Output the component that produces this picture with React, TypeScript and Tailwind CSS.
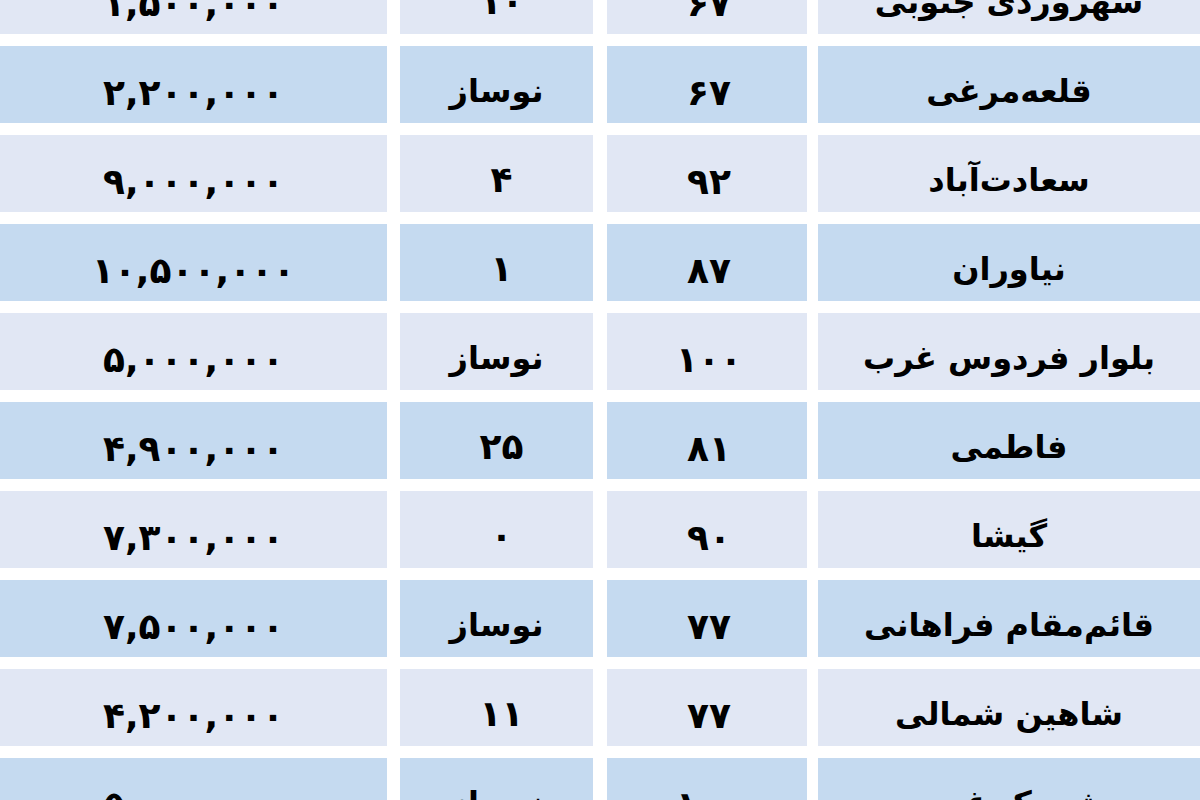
const rows = [
  { price: "۱,۵۰۰,۰۰۰", age: "۱۰", area: "۶۷", name: "سهروردی جنوبی" },
  { price: "۲,۲۰۰,۰۰۰", age: "نوساز", area: "۶۷", name: "قلعه‌مرغی" },
  { price: "۹,۰۰۰,۰۰۰", age: "۴", area: "۹۲", name: "سعادت‌آباد" },
  { price: "۱۰,۵۰۰,۰۰۰", age: "۱", area: "۸۷", name: "نیاوران" },
  { price: "۵,۰۰۰,۰۰۰", age: "نوساز", area: "۱۰۰", name: "بلوار فردوس غرب" },
  { price: "۴,۹۰۰,۰۰۰", age: "۲۵", area: "۸۱", name: "فاطمی" },
  { price: "۷,۳۰۰,۰۰۰", age: "۰", area: "۹۰", name: "گیشا" },
  { price: "۷,۵۰۰,۰۰۰", age: "نوساز", area: "۷۷", name: "قائم‌مقام فراهانی" },
  { price: "۴,۲۰۰,۰۰۰", age: "۱۱", area: "۷۷", name: "شاهین شمالی" },
  { price: "۵,۰۰۰,۰۰۰", age: "نوساز", area: "۱۰۰", name: "شهرک غرب" },
];

const isWord = (s: string) => /[\u0600-\u06cf]/.test(s);

export default function App() {
  return (
    <main
      className="w-[1200px] h-[800px] overflow-hidden bg-white"
      style={{ fontFamily: '"DejaVu Sans", "Noto Sans", sans-serif' }}
    >
      <div className="-mt-[43px] flex flex-col gap-[12px]">
        {rows.map((r, i) => {
          const bg = i % 2 === 0 ? "bg-[#e1e7f4]" : "bg-[#c5daf0]";
          return (
            <div key={i} className="flex h-[77px] font-bold text-black">
              <div
                dir="ltr"
                className={`w-[387px] flex items-center justify-center pt-4 text-[36px] tracking-[8px] ${bg}`}
              >
                {r.price}
              </div>
              <div
                dir="rtl"
                className={`ml-[13px] w-[193px] flex items-center justify-center pt-3 ${
                  isWord(r.age) ? "text-[32px]" : "text-[36px] tracking-[10px] pl-[10px]"
                } ${bg}`}
              >
                {r.age}
              </div>
              <div
                dir="ltr"
                className={`ml-[14px] w-[200px] flex items-center justify-center pt-4 pl-[4px] text-[36px] tracking-[10px] ${bg}`}
              >
                {r.area}
              </div>
              <div dir="rtl" className={`ml-[11px] flex-1 flex items-center justify-center pt-3 text-[32px] ${bg}`}>
                {r.name}
              </div>
            </div>
          );
        })}
      </div>
    </main>
  );
}
